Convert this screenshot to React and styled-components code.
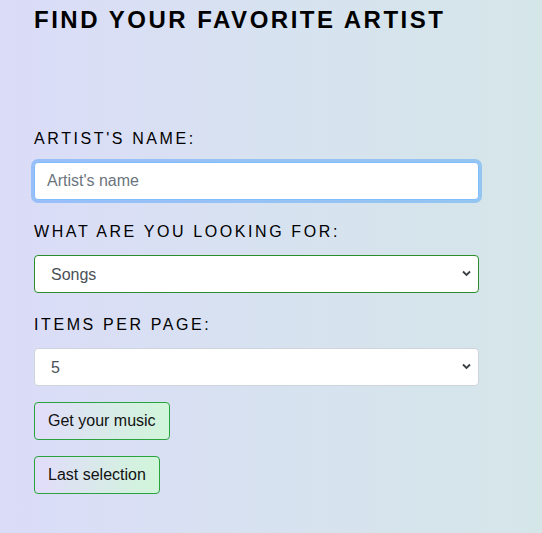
import * as React from 'react';
import styled, { createGlobalStyle } from 'styled-components';

const GlobalStyle = createGlobalStyle`
  html, body {
    margin: 0;
    padding: 0;
    min-height: 100%;
  }
  body {
    font-family: "Liberation Sans", Arial, sans-serif;
    color: #212529;
    background: linear-gradient(90deg, #dbdcf8 0%, #d7e2f0 50%, #d5e6e9 100%);
    min-height: 533px;
  }
`;

const Page = styled.div`
  padding: 5px 34px 40px;
  width: 445px;
`;

const Heading = styled.h1`
  margin: 0 0 93px;
  font-size: 24px;
  line-height: 29px;
  font-weight: 700;
  letter-spacing: 2.5px;
  color: #000;
`;

const Group = styled.div`
  margin-bottom: ${p => (p.$last ? '16px' : '20px')};
`;

const Label = styled.label`
  display: block;
  margin-bottom: 11px;
  font-size: 16px;
  line-height: 24px;
  letter-spacing: 2.6px;
  text-transform: uppercase;
  color: #000;
`;

const TextInput = styled.input`
  display: block;
  box-sizing: border-box;
  width: 100%;
  height: 38px;
  padding: 6px 12px;
  font-family: inherit;
  font-size: 16px;
  color: #495057;
  background: #fff;
  border: 1px solid #80bdff;
  border-radius: 4px;
  box-shadow: 0 0 0 3px rgba(0, 123, 255, 0.3);
  outline: none;
  &::placeholder {
    color: #6c757d;
  }
`;

const SelectWrap = styled.div`
  position: relative;
`;

const Select = styled.select`
  display: block;
  box-sizing: border-box;
  width: 100%;
  height: 38px;
  padding: 6px 28px 6px 16px;
  font-family: inherit;
  font-size: 16px;
  color: #495057;
  background: #fff;
  border: 1px solid ${p => (p.$accent ? '#2a8c2a' : '#ced4da')};
  border-radius: 4px;
  appearance: none;
  -webkit-appearance: none;
  outline: none;
`;

const Chevron = styled.svg`
  position: absolute;
  right: 8px;
  top: 15px;
  pointer-events: none;
`;

const Button = styled.button`
  display: block;
  height: 38px;
  padding: 6px 13px;
  margin-bottom: 16px;
  font-family: inherit;
  font-size: 16px;
  line-height: 24px;
  color: #111;
  background: linear-gradient(90deg, #e2dcfb 0%, #d0f6d9 100%);
  border: 1px solid #2aa33f;
  border-radius: 4px;
  cursor: pointer;
`;

function Dropdown({ accent, options, value }) {
  return (
    <SelectWrap>
      <Select $accent={accent} defaultValue={value}>
        {options.map(o => (
          <option key={o} value={o}>
            {o}
          </option>
        ))}
      </Select>
      <Chevron width="9" height="7" viewBox="0 0 9 7">
        <path d="M1 1.5 L4.5 5 L8 1.5" fill="none" stroke="#3a3f44" strokeWidth="1.8" />
      </Chevron>
    </SelectWrap>
  );
}

export default function App() {
  return (
    <>
      <GlobalStyle />
      <Page>
        <Heading>FIND YOUR FAVORITE ARTIST</Heading>
        <Group>
          <Label htmlFor="artist">Artist's name:</Label>
          <TextInput id="artist" type="text" placeholder="Artist's name" />
        </Group>
        <Group>
          <Label>What are you looking for:</Label>
          <Dropdown accent options={['Songs', 'Albums']} value="Songs" />
        </Group>
        <Group $last>
          <Label>Items per page:</Label>
          <Dropdown options={['5', '10', '15', '20']} value="5" />
        </Group>
        <Button>Get your music</Button>
        <Button>Last selection</Button>
      </Page>
    </>
  );
}
